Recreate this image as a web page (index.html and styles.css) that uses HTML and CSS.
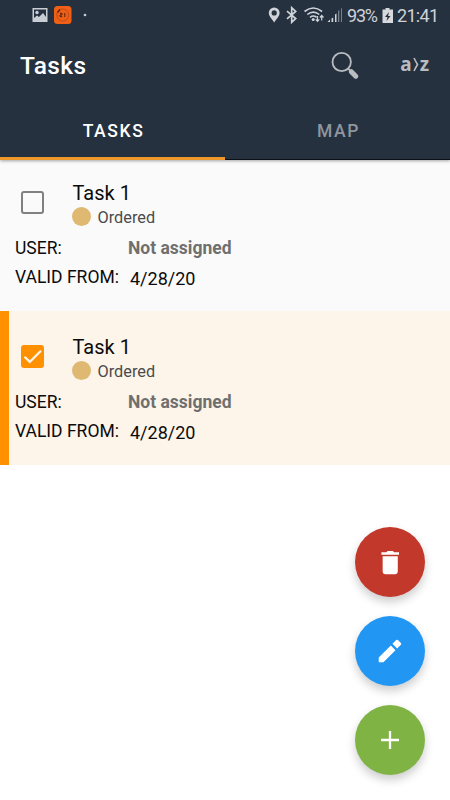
FILE: index.html
```html
<!DOCTYPE html>
<html lang="en">
<head>
<meta charset="utf-8">
<title>Tasks</title>
<link rel="stylesheet" href="styles.css">
</head>
<body>
<header class="header">
  <div class="status">
    <svg class="status-left" width="70" height="20" viewBox="30 5 70 20">
      <path fill="#c9ced5" fill-rule="evenodd" d="M32.5 8h15v14h-15zM34 9.500v8.500l3-2.500 2 1.500 4-4 3 4V9.500z"/>
      <circle cx="37" cy="12.500" r="1.700" fill="#c9ced5"/>
      <rect x="54" y="6" width="17.500" height="18" rx="3.500" fill="#ef5f15"/>
      <circle cx="62.700" cy="15" r="6" fill="none" stroke="#b5481a" stroke-width=".8"/>
      <path d="M57.500 12.500l2.500-3" stroke="#54230f" stroke-width="1.300"/>
      <path d="M60 13.300h2v1.700h-2v1.700h2.300M64.800 13v4" fill="none" stroke="#54230f" stroke-width="1"/>
      <circle cx="85" cy="15" r="1.300" fill="#c9ced5"/>
    </svg>
    <div class="status-right">
      <svg width="76" height="20" viewBox="267 5 76 20">
        <path fill="#cfd3d9" fill-rule="evenodd" d="M274.200 7.500a5.300 5.300 0 0 1 5.400 5.300c0 3.400-2.800 5.800-5.400 9.700-2.600-3.900-5.400-6.300-5.400-9.700a5.300 5.300 0 0 1 5.400-5.300zm0 2.800a2.600 2.600 0 1 0 0 5.200 2.600 2.600 0 0 0 0-5.200z"/>
        <path d="M287 11.200l8.700 7.300-4 3.700V7.800l4 3.700-8.700 7.300" fill="none" stroke="#cfd3d9" stroke-width="1.700"/>
        <g fill="none" stroke="#cfd3d9" stroke-width="1.600"><path d="M304.500 11.500q8.800-7 17.600 0M307.300 14.500q6-4.800 12 0M310 17.300q3.300-2.500 6.600 0"/><path stroke-width="1.200" d="M317.500 16v5M315.700 19.300l1.800 2 1.800-2M321.700 20.500v-4.800M319.900 17.500l1.800-2 1.800 2"/></g>
        <circle cx="313.200" cy="19.500" r="1.500" fill="#cfd3d9"/>
        <path fill="#cfd3d9" d="M327.500 22l2.500-2.500V22zM331.500 18.500l1.700-1V22h-1.700zM335 14.500l1.500-1V22H335z"/>
        <path fill="#78828e" d="M338 11l1.300-1v12H338zM341 8.800l1-.8v14h-1z"/>
      </svg>
      <span class="battery-level">93%</span>
      <svg class="battery" width="12" height="17" viewBox="0 0 12 17"><path fill="#d5d8dc" d="M3.500 1h4v1.500H11V16H.500V2.500h3z"/><path fill="#26303d" d="M7 5L3 10h2.500L4.500 14 8.500 9H6z"/></svg>
      <span class="clock">21:41</span>
    </div>
  </div>
  <div class="toolbar">
    <h1 class="title">Tasks</h1>
    <svg class="search" width="30" height="30" viewBox="0 0 30 30">
      <circle cx="10.700" cy="11" r="9.200" fill="none" stroke="#b9bcc0" stroke-width="1.800"/>
      <path d="M17.200 17.700l2.500 2.500" stroke="#b9bcc0" stroke-width="1.800"/>
      <path d="M20.300 20.700l4.500 4.500" stroke="#b9bcc0" stroke-width="5" stroke-linecap="round"/>
    </svg>
    <span class="sort">a<svg width="8" height="16" viewBox="0 0 8 16"><path d="M2 2q2 4 3.500 6.500-1.500 2.500-3.500 6.500" fill="none" stroke="#b9bcc0" stroke-width="1.600"/></svg>z</span>
  </div>
  <nav class="tabs">
    <span class="tab active">TASKS</span>
    <span class="tab">MAP</span>
  </nav>
</header>
<main class="list">
  <article class="task">
    <div class="summary">
      <span class="checkbox"></span>
      <div class="heading">
        <h2 class="name">Task 1</h2>
        <div class="state"><i class="dot"></i><span class="state-text">Ordered</span></div>
      </div>
    </div>
    <div class="field user"><span class="label">USER:</span><span class="assignee">Not assigned</span></div>
    <div class="field"><span class="label valid">VALID FROM:</span><span class="date">4/28/20</span></div>
  </article>
  <article class="task selected">
    <div class="summary">
      <span class="checkbox checked"><svg width="23" height="23" viewBox="0 0 23 23"><path d="M3.500 11.700l5.300 5.200L20 5.700" fill="none" stroke="#fdf4ea" stroke-width="2.200"/></svg></span>
      <div class="heading">
        <h2 class="name">Task 1</h2>
        <div class="state"><i class="dot"></i><span class="state-text">Ordered</span></div>
      </div>
    </div>
    <div class="field user"><span class="label">USER:</span><span class="assignee">Not assigned</span></div>
    <div class="field"><span class="label valid">VALID FROM:</span><span class="date">4/28/20</span></div>
  </article>
</main>
<aside class="actions">
  <button class="fab delete" aria-label="Delete"><svg width="33" height="33" viewBox="0 0 24 24"><path fill="#fff" d="M6.300 18.700a1.800 1.800 0 0 0 1.800 1.800h7.400a1.800 1.800 0 0 0 1.800-1.800V7.500h-11zM18.200 4.500v1.900H5.400V4.500h3.600l.9-.9h3.800l.9.900z"/></svg></button>
  <button class="fab edit" aria-label="Edit"><svg width="30" height="30" viewBox="0 0 24 24"><path fill="#fff" d="M3 17.250V21h3.750L16.400 11.350l-3.750-3.750zM20.710 7.040a1 1 0 0 0 0-1.410l-2.340-2.340a1 1 0 0 0-1.410 0l-3 3 3.750 3.750z"/></svg></button>
  <button class="fab add" aria-label="Add"><svg width="18" height="18" viewBox="0 0 18 18"><path d="M0 9h18M9 0v18" stroke="#fff" stroke-width="2.300"/></svg></button>
</aside>
</body>
</html>
```
FILE: styles.css
```css
* { box-sizing: border-box; }
body {
  margin: 0;
  height: 800px;
  display: flex;
  flex-direction: column;
  overflow: hidden;
  background: #fff;
  color: #0b0b0b;
  font-family: Roboto, "Liberation Sans", sans-serif;
}
h1, h2 { margin: 0; }
svg { display: block; flex: none; }
.header {
  height: 160px;
  flex: none;
  background: #26313f;
  border-bottom: 1px solid #0b1017;
  box-shadow: 0 1px 3px rgba(0, 0, 0, .35);
  z-index: 1;
}
.status {
  height: 30px;
  display: flex;
  align-items: center;
  justify-content: space-between;
  padding: 0 12px 0 30px;
}
.status-right {
  display: flex;
  align-items: center;
  color: #cfd3d9;
  font-size: 18px;
  line-height: 20px;
}
.battery-level { width: 34px; margin-left: 4px; letter-spacing: -1.2px; padding-top: 1px; }
.battery { margin-left: 1px; }
.clock { width: 41px; margin-left: 3px; letter-spacing: -.7px; padding-top: 1px; }
.toolbar {
  height: 71px;
  display: flex;
  align-items: center;
  padding: 0 21px 0 20px;
}
.title {
  flex: 1;
  color: #fff;
  font-size: 24.5px;
  font-weight: 500;
  letter-spacing: .4px;
}
.search { margin-right: 39px; }
.sort {
  display: flex;
  align-items: center;
  height: 24px;
  padding-bottom: 4px;
  color: #b9bcc0;
  font: 700 19px/20px "Noto Sans", sans-serif;
}
.tabs { height: 59px; display: flex; }
.tab {
  width: 225px;
  height: 59px;
  padding-left: 2px;
  text-align: center;
  line-height: 61px;
  font-size: 17.5px;
  font-weight: 500;
  letter-spacing: 1.6px;
  color: #8f969f;
}
.tab.active { color: #fff; border-bottom: 3px solid #ed9829; }
.list { flex: none; }
.task {
  height: 151px;
  padding: 20px 15px 0;
  background: #fafafa;
}
.task.selected {
  height: 154px;
  padding: 23px 15px 0 6px;
  border-left: 9px solid #ff9100;
  background: #fdf4ea;
}
.summary { display: flex; height: 54px; padding-left: 6px; }
.checkbox {
  width: 23px;
  height: 23px;
  margin: 11px 28px 0 0;
  border: 2px solid #808080;
  border-radius: 3px;
}
.checkbox.checked { border: 0; background: #ff9100; }
.name { padding-left: .5px; font-size: 20px; font-weight: 400; line-height: 26px; }
.state { display: flex; align-items: center; height: 22px; }
.dot { width: 19px; height: 19px; margin-top: -1px; border-radius: 50%; background: #dfb872; }
.state-text { margin-left: 6.5px; color: #4b4b4b; font-size: 16.3px; }
.field { display: flex; height: 29px; line-height: 28px; font-size: 17.5px; }
.field.user { line-height: 29px; }
.label { width: 113px; }
.label.valid { width: 115px; }
.assignee { color: #6f6f6f; font-weight: 700; }
.date { padding-top: 2px; font-size: 18px; }
.actions {
  position: absolute;
  right: 25px;
  bottom: 25px;
  display: flex;
  flex-direction: column;
  gap: 19px;
}
.fab {
  width: 70px;
  height: 70px;
  border: 0;
  border-radius: 50%;
  display: flex;
  align-items: center;
  justify-content: center;
  padding: 0;
  box-shadow: 0 5px 10px rgba(0, 0, 0, .2);
}
.delete { background: #c2382b; }
.edit { background: #2196f3; }
.add { background: #7fb344; }
```
